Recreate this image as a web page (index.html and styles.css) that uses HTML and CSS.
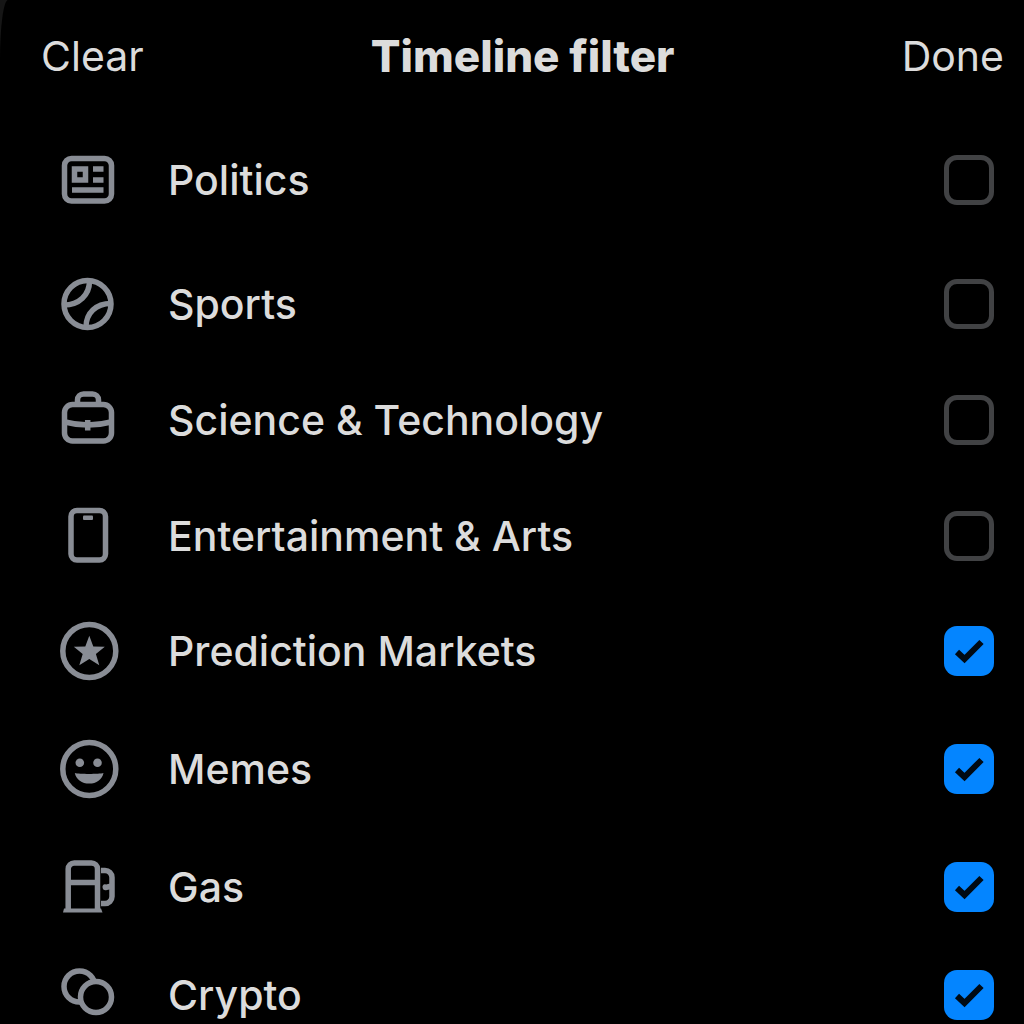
FILE: index.html
```
<!DOCTYPE html>
<html lang="en">
<head>
    <meta charset="UTF-8">
    <meta name="viewport" content="width=device-width, initial-scale=1.0">
    <title>Timeline filter</title>
    <link rel="stylesheet" href="styles.css">
</head>
<body>
    <main class="sheet">
        <header class="sheet-header">
            <button class="header-btn" type="button">Clear</button>
            <h1>Timeline filter</h1>
            <button class="header-btn" type="button">Done</button>
        </header>

        <form class="topics">
            <label class="topic">
                <svg class="icon" viewBox="0 1 60 58" aria-hidden="true">
                    <rect x="5.5" y="8.5" width="47" height="42.5" rx="7"/>
                    <rect x="15.5" y="19" width="11" height="11"/>
                    <path d="M34 19h10.5M34 30h10.5M13 40h31.5"/>
                </svg>
                <span class="name">Politics</span>
                <input type="checkbox">
            </label>

            <label class="topic topic-loose">
                <svg class="icon" viewBox="0 1 60 58" aria-hidden="true">
                    <circle cx="28.5" cy="30" r="23.5"/>
                    <path d="M30.5 7C30.5 21 20 31 5 31M52 29.5C37 29.5 27 39 27 53"/>
                </svg>
                <span class="name">Sports</span>
                <input type="checkbox">
            </label>

            <label class="topic">
                <svg class="icon" viewBox="0 1 60 58" aria-hidden="true">
                    <rect x="5.5" y="14.5" width="47" height="36.5" rx="8"/>
                    <path d="M18.5 14V10a6 6 0 0 1 6-6h9a6 6 0 0 1 6 6v4M6 32Q17 35 29 35T52 32"/>
                    <path d="M28.7 30v10.5"/>
                </svg>
                <span class="name">Science &amp; Technology</span>
                <input type="checkbox">
            </label>

            <label class="topic">
                <svg class="icon" viewBox="0 1 60 58" aria-hidden="true">
                    <rect x="12" y="4.5" width="34.5" height="49.5" rx="6"/>
                    <rect class="solid" x="24" y="9.5" width="10" height="4.5" rx="1"/>
                </svg>
                <span class="name">Entertainment &amp; Arts</span>
                <input type="checkbox">
            </label>

            <label class="topic topic-snug">
                <svg class="icon" viewBox="0 1 60 58" aria-hidden="true">
                    <circle cx="30.3" cy="30" r="26.5"/>
                    <path class="solid" d="M30.3 14.8L34.3 25.5L45.8 25.7L36.9 33L40.3 44.2L30.3 38L20.3 44.2L23.7 33L14.8 25.7L26.3 25.5Z"/>
                </svg>
                <span class="name">Prediction Markets</span>
                <input type="checkbox" checked>
            </label>

            <label class="topic topic-medium">
                <svg class="icon" viewBox="0 1 60 58" aria-hidden="true">
                    <circle cx="30.3" cy="30" r="26.5"/>
                    <circle class="solid" cx="20.8" cy="23.8" r="4.3"/>
                    <circle class="solid" cx="38.5" cy="23.8" r="4.3"/>
                    <path class="solid" d="M15.8 34C20 35.2 40 35.2 44.5 34C43 40.8 37.5 44.6 30.2 44.6S17.3 40.8 15.8 34Z"/>
                </svg>
                <span class="name">Memes</span>
                <input type="checkbox" checked>
            </label>

            <label class="topic topic-medium">
                <svg class="icon" viewBox="0 1 60 58" aria-hidden="true">
                    <path d="M9.2 53V12a6 6 0 0 1 6-6h17.3a6 6 0 0 1 6 6V53M9.2 25.5h29.3"/>
                    <path class="solid" d="M4 55.5L5 51.5H42L43.5 55.5Z"/>
                    <path d="M42 13.5h4a7 7 0 0 1 7 7v19a7 7 0 0 1-7 7h-4"/>
                    <path class="solid" d="M53 26L47 27.5C44.5 26.5 43.5 28.5 43.5 30C43.5 32.5 45.5 34 48 33L53 32Z"/>
                </svg>
                <span class="name">Gas</span>
                <input type="checkbox" checked>
            </label>

            <label class="topic topic-tight">
                <svg class="icon" viewBox="0 1 60 58" aria-hidden="true">
                    <circle cx="20.5" cy="21.5" r="15.5"/>
                    <circle class="front" cx="37" cy="32" r="15.5"/>
                </svg>
                <span class="name">Crypto</span>
                <input type="checkbox" checked>
            </label>
        </form>
    </main>
</body>
</html>
```
FILE: styles.css
```
* {
    box-sizing: border-box;
}

body {
    margin: 0;
    background-color: #161616;
    color: #dcdcdc;
    font-family: Inter, "Liberation Sans", sans-serif;
}

.sheet {
    min-height: 100vh;
    background-color: #000;
    border-top-left-radius: 8px 60px;
}

.sheet-header {
    display: flex;
    justify-content: space-between;
    align-items: center;
    height: 111px;
    padding: 0 20px 0 41px;
}

.sheet-header h1 {
    margin: 0;
    font-size: 44px;
    font-weight: 800;
}

.header-btn {
    padding: 0;
    border: none;
    background: none;
    color: inherit;
    font-family: inherit;
    font-size: 41px;
    cursor: pointer;
}

.topics {
    display: flex;
    flex-direction: column;
    padding: 40px 30px 0 59px;
}

.topic {
    display: flex;
    align-items: center;
    height: 58px;
    cursor: pointer;
}

.topic + .topic {
    margin-top: 58px;
}

.topic + .topic-loose {
    margin-top: 66px;
}

.topic + .topic-snug {
    margin-top: 57px;
}

.topic + .topic-medium {
    margin-top: 60px;
}

.topic + .topic-tight {
    margin-top: 50px;
}

.icon {
    flex: none;
    width: 60px;
    height: 58px;
    overflow: visible;
    fill: none;
    stroke: #898d95;
    stroke-width: 5.5;
}

.icon .solid {
    fill: #898d95;
    stroke: none;
}

.icon .front {
    fill: #000;
}

.name {
    flex: 1;
    margin-left: 49px;
    font-size: 41px;
    font-weight: 500;
}

.topic input {
    appearance: none;
    flex: none;
    width: 50px;
    height: 50px;
    margin: 0;
    border: 5px solid #414244;
    border-radius: 13px;
    cursor: pointer;
}

.topic input:checked {
    border: none;
    background: #0485ff url("data:image/svg+xml,%3Csvg xmlns='http://www.w3.org/2000/svg' viewBox='0 0 50 50'%3E%3Cpath d='M13 26L20.5 33L37.5 16' fill='none' stroke='%23000a14' stroke-width='6'/%3E%3C/svg%3E");
}
```
